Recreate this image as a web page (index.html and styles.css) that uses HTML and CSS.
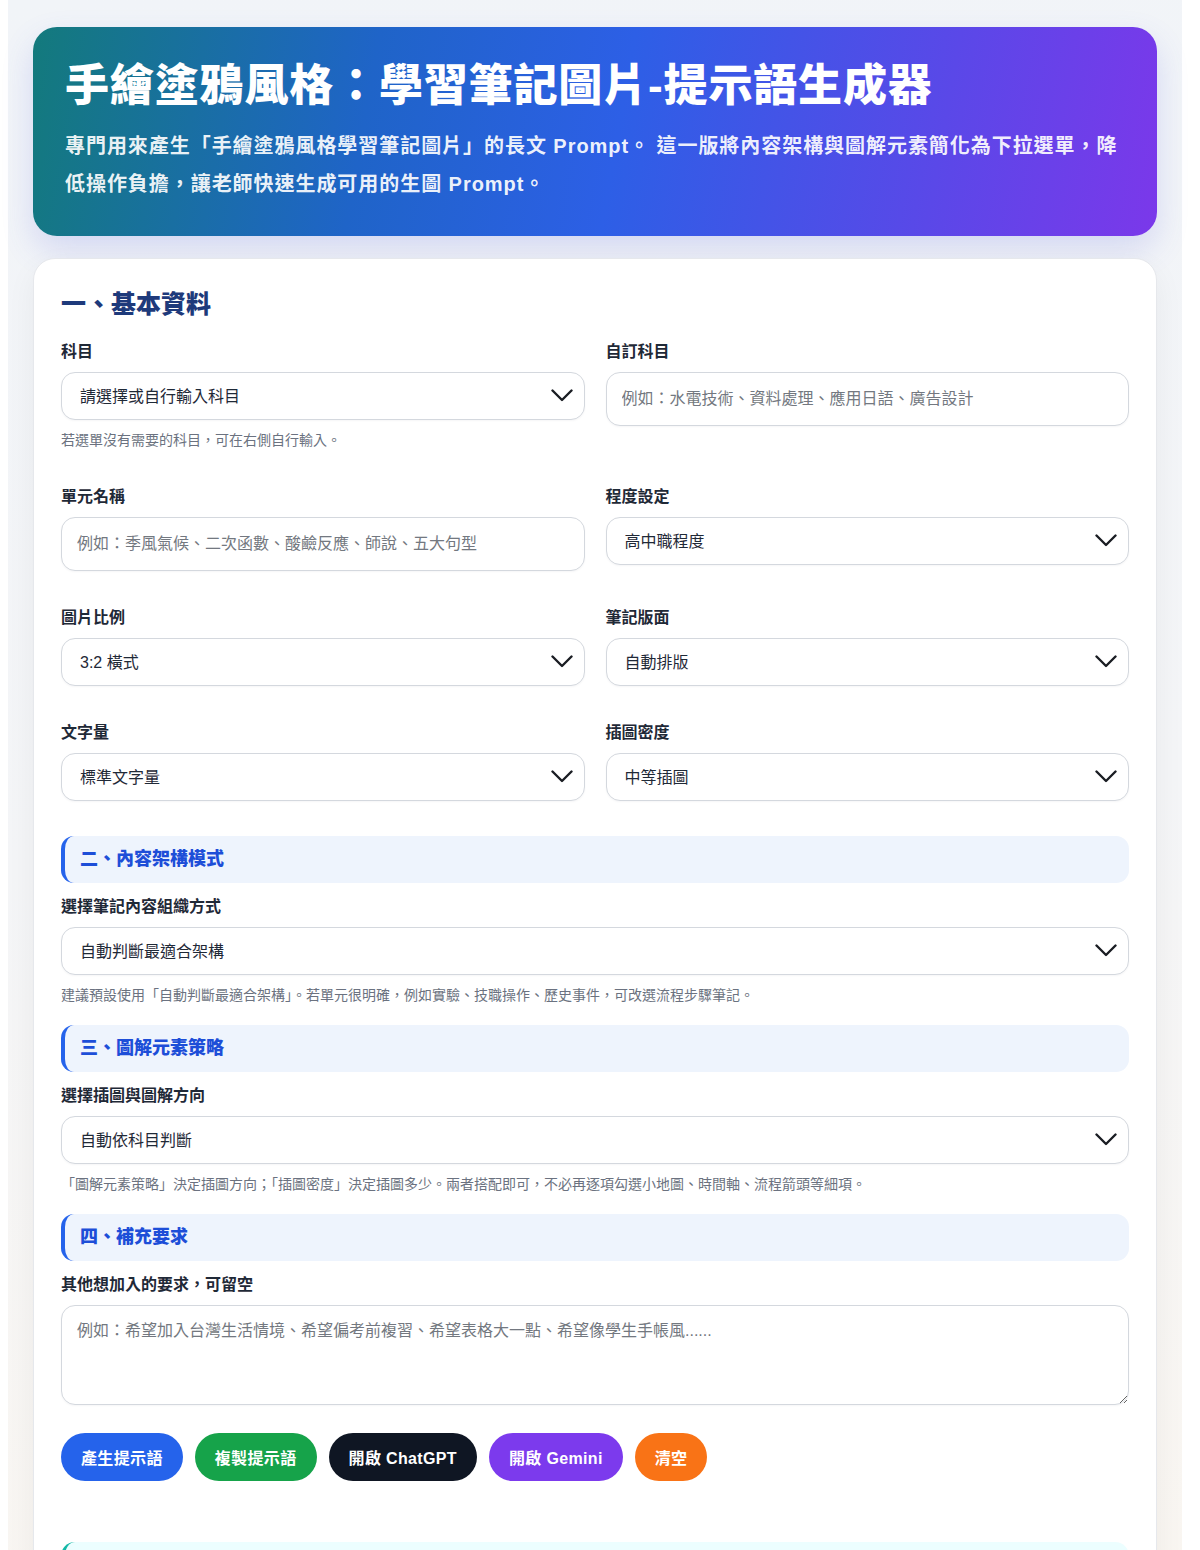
FILE: index.html
```html
<!DOCTYPE html>
<html lang="zh-Hant">
<head>
<meta charset="utf-8">
<title>手繪塗鴉風格：學習筆記圖片-提示語生成器</title>
<link rel="stylesheet" href="styles.css">
</head>
<body>
<div class="page">
  <header class="hero">
    <h1 class="hero-title">手繪塗鴉風格：學習筆記圖片-提示語生成器</h1>
    <p class="hero-sub">專門用來產生「手繪塗鴉風格學習筆記圖片」的長文 Prompt。 這一版將內容架構與圖解元素簡化為下拉選單，降低操作負擔，讓老師快速生成可用的生圖 Prompt。</p>
  </header>

  <main class="card">
    <h2 class="card-title">一、基本資料</h2>

    <div class="grid">
      <div class="field">
        <label class="label" for="subject">科目</label>
        <div class="select-wrap">
          <select id="subject" class="control select">
            <option>請選擇或自行輸入科目</option>
          </select>
          <svg class="chev" viewBox="0 0 22 13" aria-hidden="true"><polyline points="1.5,1.5 11,11 20.5,1.5"/></svg>
        </div>
        <p class="hint">若選單沒有需要的科目，可在右側自行輸入。</p>
      </div>
      <div class="field">
        <label class="label" for="custom">自訂科目</label>
        <input id="custom" class="control input" type="text" placeholder="例如：水電技術、資料處理、應用日語、廣告設計">
      </div>

      <div class="field">
        <label class="label" for="unit">單元名稱</label>
        <input id="unit" class="control input" type="text" placeholder="例如：季風氣候、二次函數、酸鹼反應、師說、五大句型">
      </div>
      <div class="field">
        <label class="label" for="level">程度設定</label>
        <div class="select-wrap">
          <select id="level" class="control select"><option>高中職程度</option></select>
          <svg class="chev" viewBox="0 0 22 13" aria-hidden="true"><polyline points="1.5,1.5 11,11 20.5,1.5"/></svg>
        </div>
      </div>

      <div class="field">
        <label class="label" for="ratio">圖片比例</label>
        <div class="select-wrap">
          <select id="ratio" class="control select"><option>3:2 橫式</option></select>
          <svg class="chev" viewBox="0 0 22 13" aria-hidden="true"><polyline points="1.5,1.5 11,11 20.5,1.5"/></svg>
        </div>
      </div>
      <div class="field">
        <label class="label" for="layout">筆記版面</label>
        <div class="select-wrap">
          <select id="layout" class="control select"><option>自動排版</option></select>
          <svg class="chev" viewBox="0 0 22 13" aria-hidden="true"><polyline points="1.5,1.5 11,11 20.5,1.5"/></svg>
        </div>
      </div>

      <div class="field">
        <label class="label" for="words">文字量</label>
        <div class="select-wrap">
          <select id="words" class="control select"><option>標準文字量</option></select>
          <svg class="chev" viewBox="0 0 22 13" aria-hidden="true"><polyline points="1.5,1.5 11,11 20.5,1.5"/></svg>
        </div>
      </div>
      <div class="field">
        <label class="label" for="density">插圖密度</label>
        <div class="select-wrap">
          <select id="density" class="control select"><option>中等插圖</option></select>
          <svg class="chev" viewBox="0 0 22 13" aria-hidden="true"><polyline points="1.5,1.5 11,11 20.5,1.5"/></svg>
        </div>
      </div>
    </div>

    <section class="block">
      <h3 class="section-head">二、內容架構模式</h3>
      <label class="label" for="structure">選擇筆記內容組織方式</label>
      <div class="select-wrap">
        <select id="structure" class="control select"><option>自動判斷最適合架構</option></select>
        <svg class="chev" viewBox="0 0 22 13" aria-hidden="true"><polyline points="1.5,1.5 11,11 20.5,1.5"/></svg>
      </div>
      <p class="hint">建議預設使用「自動判斷最適合架構」。若單元很明確，例如實驗、技職操作、歷史事件，可改選流程步驟筆記。</p>
    </section>

    <section class="block">
      <h3 class="section-head">三、圖解元素策略</h3>
      <label class="label" for="visual">選擇插圖與圖解方向</label>
      <div class="select-wrap">
        <select id="visual" class="control select"><option>自動依科目判斷</option></select>
        <svg class="chev" viewBox="0 0 22 13" aria-hidden="true"><polyline points="1.5,1.5 11,11 20.5,1.5"/></svg>
      </div>
      <p class="hint">「圖解元素策略」決定插圖方向；「插圖密度」決定插圖多少。兩者搭配即可，不必再逐項勾選小地圖、時間軸、流程箭頭等細項。</p>
    </section>

    <section class="block">
      <h3 class="section-head">四、補充要求</h3>
      <label class="label" for="extra">其他想加入的要求，可留空</label>
      <textarea id="extra" class="control textarea" placeholder="例如：希望加入台灣生活情境、希望偏考前複習、希望表格大一點、希望像學生手帳風......"></textarea>
    </section>

    <div class="actions">
      <button class="btn btn-blue" type="button">產生提示語</button>
      <button class="btn btn-green" type="button">複製提示語</button>
      <button class="btn btn-dark" type="button">開啟 ChatGPT</button>
      <button class="btn btn-purple" type="button">開啟 Gemini</button>
      <button class="btn btn-orange" type="button">清空</button>
    </div>

    
    <section class="result">
      <pre class="result-output" id="output"></pre>
    </section>
  </main>
</div>
</body>
</html>
```

FILE: styles.css
```css
* {
  box-sizing: border-box;
}

html,
body {
  margin: 0;
  background: #ffffff;
}

body {
  font-family: "Liberation Sans", "Noto Sans CJK TC", sans-serif;
  color: #1f2937;
}

.page {
  margin: 0 18px 0 8px;
  padding: 27px 25px 40px;
  min-height: 1600px;
  background: linear-gradient(175deg, #f1f4f8 0%, #f4f5f7 45%, #fbf6ef 100%);
}

/* Top banner */
.hero {
  padding: 30px 32px 33px;
  border-radius: 24px;
  color: #ffffff;
  background: linear-gradient(100deg, #137a7c 0%, #1f64c8 30%, #2d5fe6 52%, #5a48e8 80%, #7b38ea 100%);
  box-shadow: 0 14px 32px rgba(79, 90, 220, 0.18);
}

.hero-title {
  margin: 0 0 13px;
  font-size: 44px;
  line-height: 57px;
  font-weight: 900;
  letter-spacing: 0.85px;
}

.hero-sub {
  margin: 0;
  font-size: 20px;
  line-height: 38px;
  font-weight: 700;
  letter-spacing: 0.95px;
  color: rgba(255, 255, 255, 0.93);
}

/* Main form card */
.card {
  margin-top: 22px;
  padding: 28px 27px 60px;
  background: #ffffff;
  border: 1px solid #e6e8ec;
  border-radius: 22px;
  box-shadow: 0 10px 30px rgba(15, 23, 42, 0.05);
}

.card-title {
  margin: 0 0 21px;
  font-size: 25px;
  line-height: 34px;
  font-weight: 900;
  color: #1e3a7b;
}

.grid {
  display: grid;
  grid-template-columns: 1fr 1fr;
  column-gap: 21px;
  row-gap: 37px;
  align-items: start;
}

.field {
  display: flex;
  flex-direction: column;
}

.label {
  display: block;
  margin-bottom: 10px;
  font-size: 16px;
  line-height: 20px;
  font-weight: 700;
  color: #1f2937;
}

.control {
  display: block;
  width: 100%;
  font-family: inherit;
  font-size: 16px;
  color: #1f2937;
  background: #ffffff;
  border: 1px solid #d4d8de;
  border-radius: 14px;
  outline: none;
  box-shadow: 0 1px 2px rgba(15, 23, 42, 0.04);
}

.control::placeholder {
  color: #737880;
}

.select-wrap {
  position: relative;
}

.select {
  height: 48px;
  padding: 0 48px 0 18px;
  appearance: none;
  -webkit-appearance: none;
}

.chev {
  position: absolute;
  right: 12px;
  top: 17px;
  width: 22px;
  height: 13px;
  pointer-events: none;
}

.chev polyline {
  fill: none;
  stroke: #1a1d23;
  stroke-width: 2.4;
  stroke-linecap: round;
  stroke-linejoin: round;
}

.input {
  height: 54px;
  padding: 0 15px;
}

.textarea {
  height: 100px;
  padding: 14px 15px;
  line-height: 22px;
  resize: vertical;
}

.hint {
  margin: 10px 0 0;
  font-size: 14px;
  line-height: 20px;
  color: #6b7280;
}

/* Numbered sections */
.block {
  margin-top: 35px;
}

.block + .block {
  margin-top: 20px;
}

.section-head {
  margin: 0 0 14px;
  padding: 13px 16px 13px 15px;
  font-size: 18px;
  line-height: 21px;
  font-weight: 900;
  color: #1d4ed8;
  background: #eef4fd;
  border-left: 4px solid #2563eb;
  border-radius: 13px;
}

/* Buttons */
.actions {
  display: flex;
  flex-wrap: wrap;
  gap: 12px;
  margin-top: 28px;
}

.btn {
  height: 48px;
  padding: 0 20px;
  border: none;
  border-radius: 999px;
  font-family: inherit;
  font-size: 16px;
  font-weight: 700;
  letter-spacing: 0.35px;
  color: #ffffff;
  cursor: pointer;
}

.btn-blue {
  background: #2563eb;
}

.btn-green {
  background: #16a34a;
}

.btn-dark {
  background: #0f1623;
}

.btn-purple {
  background: #7c3aed;
}

.btn-orange {
  background: #f97316;
}

/* Output panel */
.result {
  margin-top: 61px;
  padding: 18px 20px;
  background: #ecfeff;
  border-left: 4px solid #14b8a6;
  border-radius: 14px;
}

.result-output {
  margin: 0;
  min-height: 160px;
  font-family: inherit;
  font-size: 15px;
  line-height: 24px;
  white-space: pre-wrap;
  color: #334155;
}
```
